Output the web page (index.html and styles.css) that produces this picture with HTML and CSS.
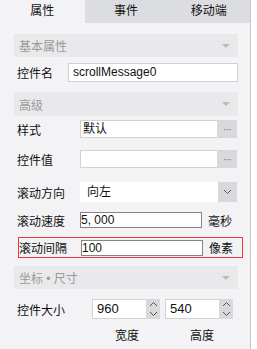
FILE: index.html
```html
<!DOCTYPE html>
<html lang="zh-CN">
<head>
    <meta charset="UTF-8">
    <title>属性面板</title>
    <link rel="stylesheet" href="styles.css">
</head>
<body>
    <div class="panel">
        <div class="tabs">
            <div class="tab active">属性</div>
            <div class="tab">事件</div>
            <div class="tab">移动端</div>
        </div>
        <div class="panel-body">
            <div class="section-title">基本属性<span class="caret"></span></div>
            <div class="row row-name">
                <span class="label label-short">控件名</span>
                <div class="text-box">scrollMessage0</div>
            </div>

            <div class="section-title sec-adv">高级<span class="caret"></span></div>
            <div class="row row-style">
                <span class="label">样式</span>
                <div class="picker"><span class="picker-value">默认</span><span class="dots">···</span></div>
            </div>
            <div class="row row-value">
                <span class="label">控件值</span>
                <div class="picker"><span class="picker-value"></span><span class="dots">···</span></div>
            </div>
            <div class="row row-dir">
                <span class="label">滚动方向</span>
                <div class="select">
                    <span class="select-value">向左</span>
                    <span class="select-btn">
                        <svg width="9" height="6" viewBox="0 0 9 6"><path d="M1 1l3.5 3.5L8 1" fill="none" stroke="#555" stroke-width="1"/></svg>
                    </span>
                </div>
            </div>
            <div class="row row-speed">
                <span class="label">滚动速度</span>
                <div class="num-box">5, 000</div>
                <span class="unit">毫秒</span>
            </div>
            <div class="row row-gap highlight">
                <span class="label">滚动间隔</span>
                <div class="num-box">100</div>
                <span class="unit">像素</span>
            </div>

            <div class="section-title sec-size">坐标 • 尺寸<span class="caret"></span></div>
            <div class="row row-size">
                <span class="label label-size">控件大小</span>
                <div class="spinner">
                    <span class="spin-value">960</span>
                    <span class="spin-btn">
                        <svg width="9" height="18" viewBox="0 0 9 18"><path d="M1 6l3.5-3.5L8 6M1 12l3.5 3.5L8 12" fill="none" stroke="#555" stroke-width="1"/></svg>
                    </span>
                </div>
                <div class="spinner">
                    <span class="spin-value">540</span>
                    <span class="spin-btn">
                        <svg width="9" height="18" viewBox="0 0 9 18"><path d="M1 6l3.5-3.5L8 6M1 12l3.5 3.5L8 12" fill="none" stroke="#555" stroke-width="1"/></svg>
                    </span>
                </div>
            </div>
            <div class="sub-labels">
                <span>宽度</span>
                <span>高度</span>
            </div>
        </div>
    </div>
</body>
</html>
```

FILE: styles.css
```css
body {
    margin: 0;
    background-color: white;
    font-family: "Liberation Sans", "Noto Sans CJK SC", sans-serif;
    font-size: 12px;
    color: #111;
}
.panel {
    width: 250px;
    height: 349px;
    background-color: #f3f3f5;
    border-right: 1px solid #c9c9cc;
}
.tabs {
    display: flex;
    height: 23px;
    background-color: #dcdde0;
}
.tab {
    width: 84px;
    text-align: center;
    line-height: 23px;
    font-size: 12px;
    color: #111;
}
.tab.active {
    background-color: #f3f3f5;
    width: 86px;
}
.panel-body {
    padding: 11px 12px 0 14px;
}
.section-title {
    height: 23px;
    background-color: #e9e9eb;
    color: #9a9a9a;
    padding: 0 8px 0 5px;
    display: flex;
    justify-content: space-between;
    align-items: center;
}
.caret {
    width: 0;
    height: 0;
    border-left: 4px solid transparent;
    border-right: 4px solid transparent;
    border-top: 4px solid #bbb;
}
.sec-adv {
    margin-top: 10px;
    height: 24px;
}
.sec-size {
    margin-top: 8px;
}
.row {
    display: flex;
    align-items: center;
    padding-left: 3px;
}
.label {
    width: 63px;
    flex-shrink: 0;
}
.label-short {
    width: 51px;
}
.label-size {
    width: 75px;
}
.row-name {
    margin-top: 6px;
    height: 19px;
}
.text-box {
    flex-grow: 1;
    height: 17px;
    line-height: 17px;
    background-color: white;
    border: 1px solid #d2d2d4;
    padding-left: 4px;
}
.row-style {
    margin-top: 4px;
    height: 18px;
}
.row-value {
    margin-top: 12px;
    height: 18px;
}
.picker {
    display: flex;
    width: 157px;
    height: 18px;
}
.picker-value {
    flex-grow: 1;
    background-color: white;
    border: 1px solid #d2d2d4;
    border-right: none;
    line-height: 16px;
    padding-left: 2px;
}
.dots {
    width: 20px;
    background-color: #d9d9dc;
    color: #777;
    text-align: center;
    line-height: 18px;
    font-size: 11px;
    letter-spacing: -1px;
}
.row-dir {
    margin-top: 14px;
    height: 20px;
}
.select {
    display: flex;
    width: 157px;
    height: 20px;
}
.select-value {
    flex-grow: 1;
    background-color: white;
    line-height: 20px;
    padding-left: 7px;
}
.select-btn {
    width: 19px;
    background-color: #d9d9dc;
    display: flex;
    align-items: center;
    justify-content: center;
}
.row-speed {
    margin-top: 10px;
    height: 16px;
}
.num-box {
    width: 120px;
    height: 14px;
    line-height: 14px;
    background-color: white;
    border: 1px solid #858585;
    font-size: 12px;
}
.unit {
    margin-left: 6px;
}
.highlight {
    margin-top: 9px;
    height: 19px;
    border: 1px solid #e8383d;
    margin-left: 4px;
    width: 223px;
    padding-left: 0;
}
.highlight .label {
    width: 62px;
}
.row-size {
    margin-top: 10px;
    height: 20px;
}
.spinner {
    display: flex;
    width: 70px;
    height: 20px;
    margin-right: 5px;
}
.spin-value {
    flex-grow: 1;
    background-color: white;
    border: 1px solid #d2d2d4;
    border-right: none;
    line-height: 18px;
    padding-left: 4px;
    font-size: 13px;
}
.spin-btn {
    width: 14px;
    background-color: #d9d9dc;
    display: flex;
    align-items: center;
    justify-content: center;
}
.sub-labels {
    display: flex;
    gap: 51px;
    padding-left: 101px;
    margin-top: 7px;
}
```
